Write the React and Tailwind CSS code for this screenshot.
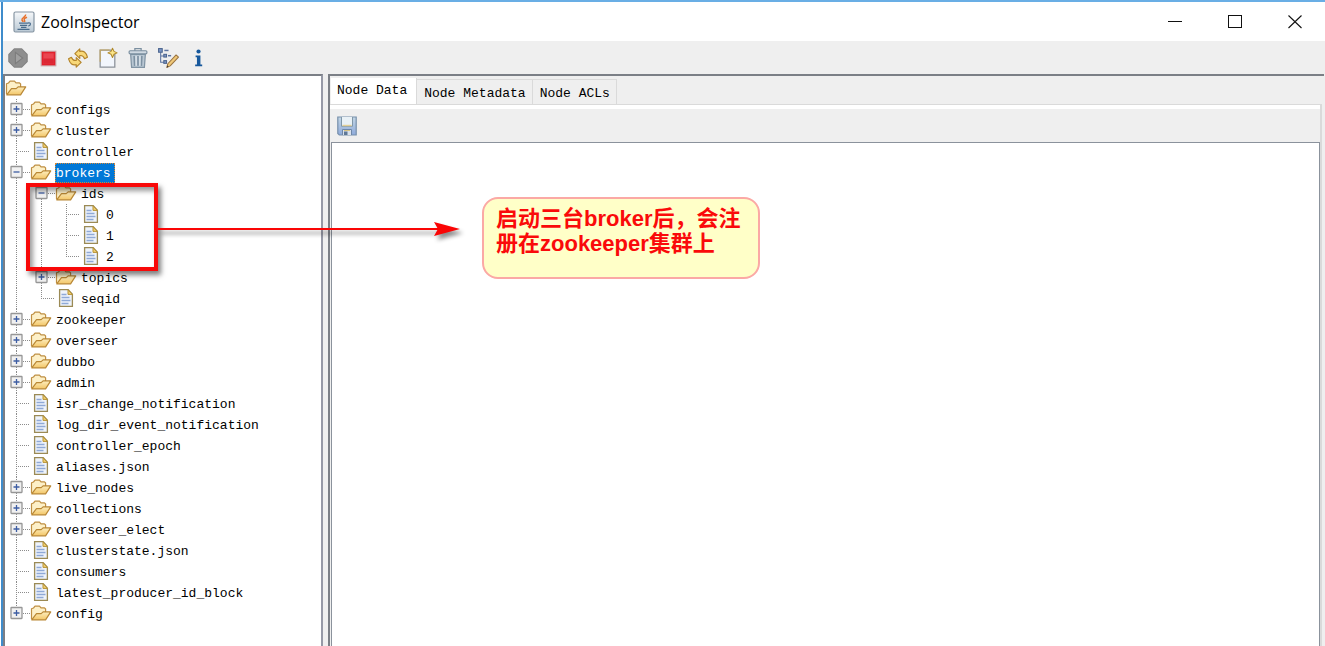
import React, { useState } from "react";

const TREE = [
  { name: "configs", folder: true },
  { name: "cluster", folder: true },
  { name: "controller" },
  {
    name: "brokers",
    folder: true,
    children: [
      { name: "ids", folder: true, children: [{ name: "0" }, { name: "1" }, { name: "2" }] },
      { name: "topics", folder: true },
      { name: "seqid" },
    ],
  },
  { name: "zookeeper", folder: true },
  { name: "overseer", folder: true },
  { name: "dubbo", folder: true },
  { name: "admin", folder: true },
  { name: "isr_change_notification" },
  { name: "log_dir_event_notification" },
  { name: "controller_epoch" },
  { name: "aliases.json" },
  { name: "live_nodes", folder: true },
  { name: "collections", folder: true },
  { name: "overseer_elect", folder: true },
  { name: "clusterstate.json" },
  { name: "consumers" },
  { name: "latest_producer_id_block" },
  { name: "config", folder: true },
];

function FolderIcon() {
  return (
    <svg width="22" height="21" viewBox="0 0 22 21" className="shrink-0" aria-hidden="true">
      <path d="M1.500 16V5.800L3.500 5 5 3.200h4.500l1.500 1.700h3.500L15.600 6v3" fill="#fdf0c8" stroke="#bf8f42" strokeWidth="1.200" strokeLinejoin="round" />
      <path d="M1.700 16.800L6.500 10.600h4.700l1.900-1.700h7.600L15.600 16.800z" fill="url(#folderFront)" stroke="#b98734" strokeWidth="1.200" strokeLinejoin="round" />
    </svg>
  );
}

function FileIcon() {
  return (
    <svg width="22" height="21" viewBox="0 0 22 21" className="shrink-0" aria-hidden="true">
      <path d="M4.600 1.600h8.600l4.200 4.600v12.200H4.600z" fill="#eef3fb" stroke="#9b8a55" strokeWidth="1.300" />
      <path d="M13 1.800v4.600h4.400z" fill="#f0cf72" stroke="#b79337" strokeWidth="1" />
      <path d="M6.500 6.500h5M6.500 9.500h8M6.500 12.500h9M6.500 15.500h7" stroke="#8fa9d6" strokeWidth="1.300" />
    </svg>
  );
}

function Guide({ kind }) {
  return (
    <svg width="25" height="21" viewBox="0 0 25 21" className="shrink-0" aria-hidden="true">
      {kind !== "none" && (
        <path d={kind === "ell" ? "M11.5 0V11" : "M11.5 0V21"} stroke="#8c8c8c" strokeDasharray="1 1" fill="none" />
      )}
      {(kind === "tee" || kind === "ell") && (
        <path d="M13 10.5H25" stroke="#8c8c8c" strokeDasharray="1 1" fill="none" />
      )}
    </svg>
  );
}

function Expander({ kind, open, onClick, name }) {
  return (
    <button type="button" onClick={onClick} aria-label={(open ? "Collapse " : "Expand ") + name} className="block h-[21px] w-[25px] shrink-0">
      <svg width="25" height="21" viewBox="0 0 25 21" aria-hidden="true">
        <path d={kind === "ell" ? "M11.5 0V11" : "M11.5 0V21"} stroke="#8c8c8c" strokeDasharray="1 1" />
        <path d="M18 10.5H25" stroke="#8c8c8c" strokeDasharray="1 1" />
        <rect x="6" y="4.500" width="11" height="11" rx="0.500" fill="#f1f1f1" stroke="#969696" strokeWidth="1.300" />
        <path d={open ? "M8.500 10h6" : "M8.500 10h6M11.500 7v6"} stroke="#3d5da3" strokeWidth="1.300" />
      </svg>
    </button>
  );
}

function TreeNode({ node, trail, last, selected, onSelect }) {
  const [open, setOpen] = useState(Boolean(node.children));
  const kind = last ? "ell" : "tee";
  const isSelected = selected === node.name;
  return (
    <li role="treeitem" aria-selected={isSelected} aria-expanded={node.folder ? open : undefined}>
      <div className="flex h-[21px] items-center">
        {trail.map((t, i) => (
          <Guide key={i} kind={t} />
        ))}
        {node.folder ? (
          <Expander kind={kind} open={open} name={node.name} onClick={() => setOpen(!open)} />
        ) : (
          <Guide kind={kind} />
        )}
        {node.folder ? <FolderIcon /> : <FileIcon />}
        <button
          type="button"
          onClick={() => onSelect(node.name)}
          className={
            isSelected
              ? "ml-[3px] h-5 border border-dotted border-[#d68a3a] bg-[#0078d7] pr-[3px] leading-5 text-white"
              : "ml-[3px] h-5 border border-transparent pr-[3px] leading-5"
          }
        >
          {node.name}
        </button>
      </div>
      {open && node.children && (
        <ul role="group">
          {node.children.map((c, i) => (
            <TreeNode
              key={c.name}
              node={c}
              trail={[...trail, last ? "none" : "line"]}
              last={i === node.children.length - 1}
              selected={selected}
              onSelect={onSelect}
            />
          ))}
        </ul>
      )}
    </li>
  );
}

function JavaIcon() {
  return (
    <svg width="22" height="22" viewBox="0 0 22 22" aria-hidden="true">
      <rect x="1" y="1" width="20" height="20" rx="1.500" fill="url(#javaTile)" stroke="#8796a3" strokeWidth="1.200" />
      <path d="M12.600 3.500c.7 2.400-4.600 3.400-3.600 5.600.3.700 1 1 1.200 1.800M14 6.200c-2 .8-3.400 1.800-2.600 3 .5.700.5 1.200 0 1.800" fill="none" stroke="#e8702a" strokeWidth="1.500" />
      <path d="M6 12.200h9.300M7 14.400h7.200M8 16.300h5.400M4.500 18.400h12" stroke="#4a6c8c" strokeWidth="1.300" fill="none" />
      <path d="M15 12c3.200-.8 3.200 2.200.2 3" stroke="#4a6c8c" strokeWidth="1.200" fill="none" />
    </svg>
  );
}

const TOOLS = [
  {
    label: "Connect",
    art: (
      <>
        <path d="M7 1.800h7L19.200 7v7L14 19.200H7L1.800 14V7z" fill="#8e8e8e" stroke="#848484" strokeWidth="1.200" strokeLinejoin="round" />
        <path d="M8 5v11l7-5.500z" fill="#a0a0a0" stroke="#7c7c7c" />
      </>
    ),
  },
  {
    label: "Disconnect",
    art: (
      <>
        <rect x="4" y="4" width="14" height="14" fill="#e2202c" stroke="#c9a6a8" />
        <rect x="5.500" y="5.500" width="11" height="11" fill="#ea4550" stroke="#e0202c" />
        <path d="M6 11h10v5H6z" fill="#dc2733" />
      </>
    ),
  },
  {
    label: "Refresh",
    art: (
      <g fill="#f8d878" stroke="#b4842a" strokeWidth="1.100" strokeLinejoin="round">
        <path d="M7.500 6.300L12.200 1.800V4.200c3.500-1 6 .8 7.300 5.500l-2.700 1.500C15.700 8.400 14.600 7.700 12.200 8.200v2.700z" />
        <path d="M13.500 14.700L8.800 19.200V16.800c-3.500 1-6-.8-7.300-5.500l2.700-1.500c1.100 2.800 2.200 3.500 4.600 3v-2.700z" />
      </g>
    ),
  },
  {
    label: "Add node",
    art: (
      <>
        <path d="M3 3h10l4 4v12.300H3z" fill="#f2f6fc" stroke="#8b9199" strokeWidth="1.200" />
        <path d="M3 14V2.800h9" fill="none" stroke="#c9a85a" />
        <path d="M14.800 1.200l1.400 3 3 1.400-3 1.400-1.400 3-1.400-3-3-1.400 3-1.400z" fill="#fbe58a" stroke="#b08a2c" strokeLinejoin="round" />
      </>
    ),
  },
  {
    label: "Delete node",
    art: (
      <>
        <path d="M3.500 7h14L16.600 19.500H4.400z" fill="#b9c7d3" stroke="#8194a4" strokeWidth="1.200" />
        <rect x="2" y="3.600" width="17" height="3" rx="1" fill="#cfd9e2" stroke="#7b8fa0" strokeWidth="1.100" />
        <path d="M7.500 3.500V1.600h6v1.900" fill="none" stroke="#7b8fa0" strokeWidth="1.200" />
        <path d="M6.800 8.500l.5 9.500M10.500 8.500V18M14.200 8.500l-.5 9.500" stroke="#7d91a2" strokeWidth="1.500" />
        <path d="M8.700 8.500V18M12.300 8.500V18" stroke="#e4ebf1" />
      </>
    ),
  },
  {
    label: "Node viewers",
    art: (
      <>
        <path d="M3.500 4.500V14.500H8M3.500 8.500H8" fill="none" stroke="#5b73a0" />
        <rect x="1.500" y="1.500" width="3.500" height="3.500" fill="#7b95c4" stroke="#4d6690" />
        <path d="M7 3.300h4" stroke="#5b73a0" strokeWidth="1.400" />
        <rect x="6.500" y="7" width="2.600" height="2.600" fill="#7b95c4" stroke="#4d6690" />
        <path d="M10.500 8.300h3" stroke="#5b73a0" strokeWidth="1.400" />
        <rect x="6.500" y="13" width="2.600" height="2.600" fill="#7b95c4" stroke="#4d6690" />
        <path d="M18.200 7.600l2.300 2L12.600 18l-3.200 1.500.9-3.500z" fill="#efc878" stroke="#9a7340" strokeLinejoin="round" />
        <path d="M9.400 19.500l1.700-.8-1.200-1z" fill="#333" />
      </>
    ),
  },
  {
    label: "About",
    art: (
      <>
        <path d="M8.200 8.200h4.600v8.400h1.700v1.700H7.800v-1.700h1.700V9.900H8.200z" fill="#17589c" />
        <circle cx="11" cy="4.300" r="2" fill="#17589c" />
      </>
    ),
  },
];

const TABS = ["Node Data", "Node Metadata", "Node ACLs"];

export default function App() {
  const [selected, setSelected] = useState("brokers");
  const [tab, setTab] = useState("Node Data");
  return (
    <div className="relative flex min-h-screen flex-col border-t-2 border-[#69aee5] bg-white font-['Liberation_Mono',monospace] text-[13px] text-black">
      <svg width="0" height="0" className="absolute" aria-hidden="true">
        <defs>
          <linearGradient id="folderFront" x1="0" y1="0" x2="0" y2="1">
            <stop offset="0" stopColor="#fdeebf" />
            <stop offset="1" stopColor="#f3c667" />
          </linearGradient>
          <linearGradient id="javaTile" x1="0" y1="0" x2="0" y2="1">
            <stop offset="0" stopColor="#f6f8fa" />
            <stop offset="1" stopColor="#b9c8d4" />
          </linearGradient>
          <linearGradient id="diskBody" x1="0" y1="0" x2="0" y2="1">
            <stop offset="0" stopColor="#c3d6e4" />
            <stop offset="1" stopColor="#8fabdc" />
          </linearGradient>
        </defs>
      </svg>

      <div className="ml-px flex grow flex-col border-l-2 border-[#3f8ccb]">
        <header className="flex h-[39px] items-center justify-between pl-[10px] font-['Open_Sans',sans-serif]">
          <div className="flex items-center gap-[6px]">
            <JavaIcon />
            <h1 className="text-base leading-5 text-black">ZooInspector</h1>
          </div>
          <div className="flex">
            <button type="button" aria-label="Minimize" className="flex h-9 w-[60px] items-center justify-center">
              <svg width="14" height="14" viewBox="0 0 14 14"><path d="M0 6.500h14" stroke="#111" /></svg>
            </button>
            <button type="button" aria-label="Maximize" className="flex h-9 w-[60px] items-center justify-center">
              <svg width="14" height="14" viewBox="0 0 14 14"><rect x="0.500" y="0.500" width="13" height="12" fill="none" stroke="#111" /></svg>
            </button>
            <button type="button" aria-label="Close" className="flex h-9 w-[60px] items-center justify-center">
              <svg width="14" height="14" viewBox="0 0 14 14"><path d="M.5.5l13 12.500M13.500.5l-13 12.500" stroke="#111" strokeWidth="1.100" /></svg>
            </button>
          </div>
        </header>

        <div role="toolbar" aria-label="Main" className="flex h-[33px] items-center gap-2 bg-[#efefef] pl-1">
          {TOOLS.map((t) => (
            <button key={t.label} type="button" aria-label={t.label} className="h-[22px] w-[22px]">
              <svg width="22" height="22" viewBox="0 0 21 21" aria-hidden="true">{t.art}</svg>
            </button>
          ))}
        </div>

        <main className="flex grow gap-[5px] bg-[#efefef] pr-px">
          <nav aria-label="Nodes" className="w-[320px] shrink-0 border-x-2 border-t-2 border-[#7b7f86] border-r-[#9699a6] bg-white pt-[2px]">
            <div className="flex h-[21px] items-center">
              <FolderIcon />
            </div>
            <ul role="tree" aria-label="Nodes">
              {TREE.map((n, i) => (
                <TreeNode
                  key={n.name}
                  node={n}
                  trail={[]}
                  last={i === TREE.length - 1}
                  selected={selected}
                  onSelect={setSelected}
                />
              ))}
            </ul>
          </nav>

          <section className="flex min-w-0 grow flex-col border-l-2 border-t-2 border-[#7b7f86] pr-[2px] pt-[2px]">
            <div role="tablist" className="flex h-[26px] items-end pl-px">
              {TABS.map((t) => (
                <button
                  key={t}
                  type="button"
                  role="tab"
                  aria-selected={tab === t}
                  onClick={() => setTab(t)}
                  className={
                    tab === t
                      ? "h-[26px] border-r border-[#dadada] bg-white pl-[6px] pr-[9px]"
                      : "h-[25px] border-r border-t border-[#dadada] pl-[7px] pr-[6px] pt-1"
                  }
                >
                  {t}
                </button>
              ))}
            </div>
            <div className="flex grow flex-col border-r-2 border-t border-[#dadada]">
              <div className="h-1 bg-white" />
              <div role="toolbar" aria-label="Data" className="flex h-[33px] items-center pl-[7px]">
                <button type="button" aria-label="Save" className="h-5 w-5">
                  <svg width="20" height="20" viewBox="0 0 20 20" aria-hidden="true">
                    <path d="M.8 1h18.400v18H2.300L.8 17.500z" fill="url(#diskBody)" stroke="#7790ab" strokeWidth="1.200" />
                    <path d="M4.500 1v9.300h11V1" fill="#e9f1f6" stroke="#8097a8" />
                    <path d="M5.500 9.500h9" stroke="#e3cf94" strokeWidth="1.400" />
                    <path d="M5.500 19v-5.500h9V19" fill="#d9e1ec" stroke="#6f88a8" />
                    <path d="M7 15.500h3.500V19H7z" fill="#5f7896" />
                    <path d="M7 14.500h6" stroke="#d9c382" />
                  </svg>
                </button>
              </div>
              <textarea
                aria-label="Node data"
                className="ml-px block grow resize-none border-x border-t border-[#8b929c] bg-white p-1 outline-none"
              />
            </div>
          </section>
        </main>
      </div>

      <div className="pointer-events-none absolute left-[26px] top-[181px] h-[88px] w-[132px] border-4 border-[#f80808] shadow-[3px_4px_5px_rgba(0,0,0,0.5),inset_3px_4px_5px_rgba(0,0,0,0.4)]" />
      <svg className="pointer-events-none absolute left-[158px] top-[210px]" width="312" height="36" viewBox="0 0 312 36" aria-hidden="true">
        <g className="drop-shadow-[3px_4px_2px_rgba(0,0,0,0.45)]">
          <path d="M0 16h280v2H0z" fill="#fa0505" />
          <path d="M276 10l26 7-26 7 4-7z" fill="#fa0505" />
        </g>
      </svg>
      <p className="absolute left-[482px] top-[195px] h-[82px] w-[278px] rounded-2xl border-2 border-[#fba9a5] bg-[#ffffc8] px-3 py-[7px] font-['Liberation_Sans','Noto_Sans_CJK_SC',sans-serif] text-[22px] font-bold leading-[25px] text-[#fa0a0a]">
        启动三台broker后，会注册在zookeeper集群上
      </p>
    </div>
  );
}
